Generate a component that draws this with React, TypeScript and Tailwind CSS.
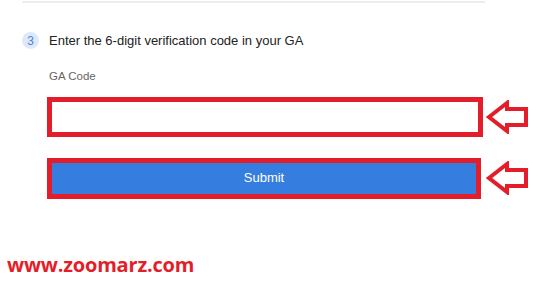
import React from 'react';

function Arrow() {
  return (
    <svg width="44" height="34" viewBox="0 0 44 34" className="shrink-0">
      <polygon
        points="3,17 21,3 21,9 40,9 40,25 21,25 21,31"
        fill="#ffffff"
        stroke="#e31e2a"
        strokeWidth="4"
        strokeLinejoin="miter"
      />
    </svg>
  );
}

export default function App() {
  return (
    <div className="w-[549px] h-[284px] bg-white relative overflow-hidden font-['Liberation_Sans',Arial,sans-serif]">
      <div className="ml-[22px] w-[463px] h-[2px] bg-[#ececec] mt-px" />

      <div className="flex items-center ml-[22px] mt-[29px] gap-[10px]">
        <div className="w-[17px] h-[17px] rounded-full bg-[#dde9f8] flex items-center justify-center text-[12px] text-[#4a86d8] leading-none">
          3
        </div>
        <span className="text-[13px] text-[#222] leading-none">Enter the 6-digit verification code in your GA</span>
      </div>

      <div className="ml-[49px] mt-[22px] text-[11.5px] text-[#666] leading-none">GA Code</div>

      <div className="flex items-center ml-[47px] mt-[14px] gap-[3px]">
        <div className="w-[436px] h-[40px] border-[5px] border-[#e31e2a] bg-white" />
        <Arrow />
      </div>

      <div className="flex items-center ml-[47px] mt-[21px] gap-[5px]">
        <div className="w-[434px] h-[41px] border-[5px] border-[#e31e2a] bg-[#367de0] flex items-center justify-center text-white text-[13px]">
          Submit
        </div>
        <Arrow />
      </div>

      <div className="ml-[7px] mt-[56px] text-[20px] font-bold text-[#e31e2a] leading-none font-['Open_Sans',sans-serif] tracking-[-0.2px]">
        www.zoomarz.com
      </div>
    </div>
  );
}
